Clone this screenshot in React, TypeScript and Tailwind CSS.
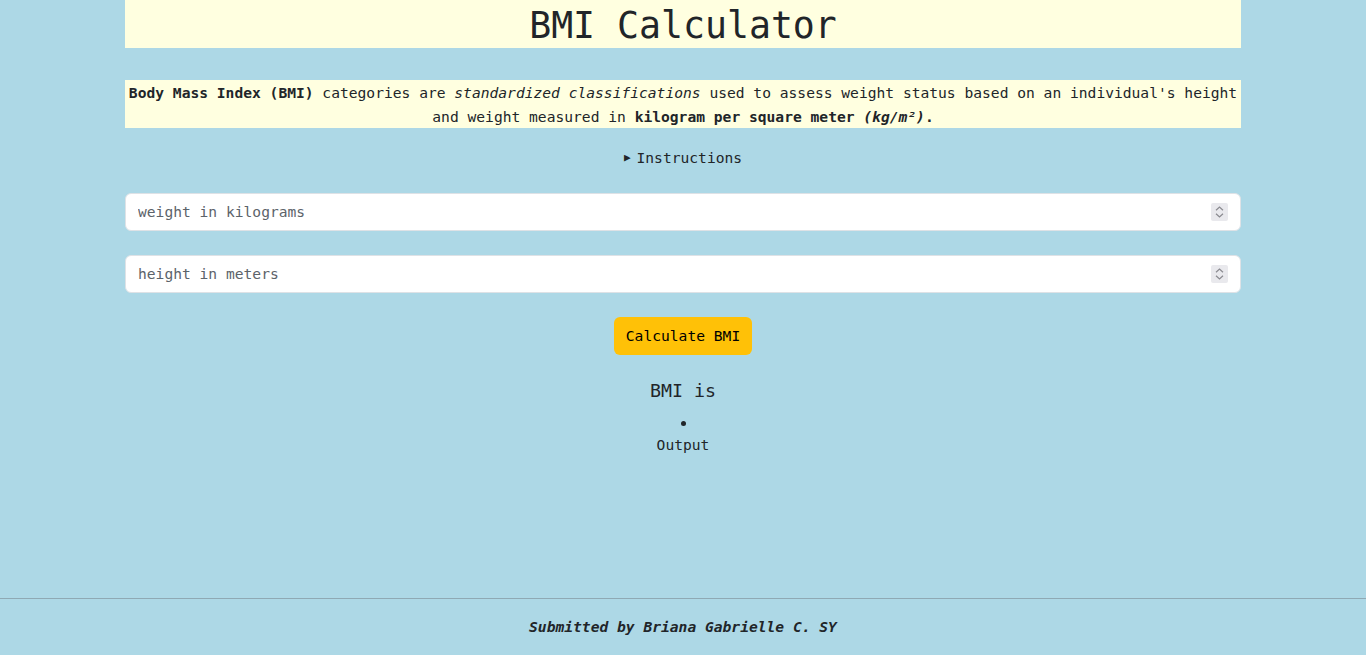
function Spinner() {
  return (
    <div className="w-[17px] h-[18px] bg-[#e9e9ed] rounded-[2px] flex flex-col items-center justify-center gap-[2px]">
      <svg width="9" height="5" viewBox="0 0 9 5" fill="none">
        <path d="M1 4.2 L4.5 1 L8 4.2" stroke="#8a8a90" strokeWidth="1.2" />
      </svg>
      <svg width="9" height="5" viewBox="0 0 9 5" fill="none">
        <path d="M1 0.8 L4.5 4 L8 0.8" stroke="#8a8a90" strokeWidth="1.2" />
      </svg>
    </div>
  );
}

function NumberField({ placeholder, className }: { placeholder: string; className?: string }) {
  return (
    <div
      className={`flex items-center h-[38px] bg-white border border-[#dee2e6] rounded-[6px] pl-3 pr-3 ${className ?? ""}`}
    >
      <input
        type="text"
        placeholder={placeholder}
        className="flex-1 bg-transparent outline-none text-[14.62px] text-[#212529] placeholder:text-[#5c636a]"
      />
      <Spinner />
    </div>
  );
}

export default function App() {
  return (
    <div className="min-h-screen flex flex-col bg-[#add8e6] text-[#212529] font-['DejaVu_Sans_Mono',monospace]">
      <main className="w-[1116px] mx-auto">
        <h1 className="h-12 pt-[3px] bg-[#ffffe0] text-center text-[36.5px] leading-[45px]">
          BMI Calculator
        </h1>

        <p className="mt-8 h-12 pt-px bg-[#ffffe0] text-center text-[14.62px] leading-6">
          <b>Body Mass Index (BMI)</b> categories are <i>standardized classifications</i> used to
          assess weight status based on an individual's height and weight measured in{" "}
          <b>
            kilogram per square meter <i>(kg/m²)</i>.
          </b>
        </p>

        <div className="mt-[18px] flex justify-center items-center gap-[6px] text-[14.62px] leading-6">
          <span className="text-[11px]">&#9654;</span>
          <span>Instructions</span>
        </div>

        <NumberField placeholder="weight in kilograms" className="mt-[23px]" />
        <NumberField placeholder="height in meters" className="mt-6" />

        <div className="mt-6 flex justify-center">
          <button className="h-[38px] px-3 rounded-[6px] bg-[#ffc107] text-[14.62px] text-black">
            Calculate BMI
          </button>
        </div>

        <h2 className="mt-[21px] text-center text-[18.3px] leading-[30px]">BMI is</h2>
        <div className="mt-[5px] flex flex-col items-center">
          <div className="h-6 flex items-center">
            <span className="w-[5px] h-[5px] rounded-full bg-[#212529]" />
          </div>
          <div className="text-[14.62px] leading-5">Output</div>
        </div>
      </main>

      <footer className="mt-auto border-t border-[#8fa9b4] py-4 text-center text-[14.62px] leading-6 italic font-bold">
        Submitted by Briana Gabrielle C. SY
      </footer>
    </div>
  );
}
